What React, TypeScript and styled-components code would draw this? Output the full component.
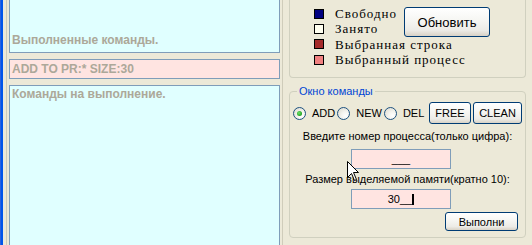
import React from "react";
import styled, { createGlobalStyle } from "styled-components";

const GlobalStyle = createGlobalStyle`
  html, body {
    margin: 0;
    padding: 0;
    width: 532px;
    height: 245px;
    overflow: hidden;
    background: #ece9d8;
  }
  #root { width: 532px; height: 245px; }
  * { box-sizing: border-box; }
`;

const Window = styled.div`
  position: relative;
  display: flex;
  width: 532px;
  height: 245px;
  overflow: hidden;
  background: #ece9d8;
  font-family: "Liberation Sans", Arial, sans-serif;
  font-size: 11px;
  color: #000;
`;

const FrameEdge = styled.div`
  flex: 0 0 3px;
  border-left: 1px solid #2a62de;
  background: #0055ea;
`;

const LeftPane = styled.div`
  flex: 0 0 276px;
  margin-left: 3px;
  border-left: 1px solid #cfccba;
  padding: 0 2px;
  display: flex;
  flex-direction: column;
  gap: 6px;
`;

const LogBox = styled.div<{ $bg: string; $h: number; $open?: boolean }>`
  flex: 0 0 ${(p) => p.$h}px;
  background: ${(p) => p.$bg};
  border: 1px solid #7f9db9;
  border-top-width: ${(p) => (p.$open ? 0 : 1)}px;
  display: flex;
  flex-direction: column;
  justify-content: ${(p) => (p.$open ? "flex-end" : "flex-start")};
  padding: ${(p) => (p.$open ? "0 2px 5px" : "2px 2px 0")};
  font-family: "Liberation Sans", Arial, sans-serif;
  font-weight: bold;
  font-size: 12px;
  line-height: 13px;
  color: #aca899;
  white-space: nowrap;
`;

const CommandLine = styled.div`
  flex: 0 0 20px;
  background: #ffe4e1;
  border: 1px solid #7f9db9;
  padding: 1px 2px 0;
  font-family: "Liberation Sans", Arial, sans-serif;
  font-weight: bold;
  font-size: 12px;
  line-height: 17px;
  color: #aca899;
  white-space: nowrap;
`;

const RightPane = styled.div`
  flex: 0 0 251px;
  border-left: 1px solid #cfccba;
  border-right: 1px solid #cfccba;
  padding: 0 6px;
  display: flex;
  flex-direction: column;
`;

const LegendGroup = styled.div`
  flex: 0 0 78px;
  border: 1px solid #d0d0bf;
  border-top: none;
  border-radius: 0 0 4px 4px;
  padding: 6px 0 0 24px;
  display: grid;
  grid-template-columns: 21px 69px 86px;
  grid-auto-rows: 15.4px;
  align-content: start;
`;

const Swatch = styled.span<{ $color: string }>`
  grid-column: 1;
  align-self: center;
  width: 10px;
  height: 10px;
  border: 1px solid #000;
  background: ${(p) => p.$color};
`;

const SwatchLabel = styled.span<{ $wide?: boolean }>`
  grid-column: ${(p) => (p.$wide ? "2 / 4" : "2")};
  font-family: "Liberation Serif", "Times New Roman", serif;
  font-size: 13px;
  letter-spacing: 1px;
  line-height: 15px;
  white-space: nowrap;
`;

const XpButton = styled.button<{ $w: number; $h: number; $size?: number }>`
  width: ${(p) => p.$w}px;
  height: ${(p) => p.$h}px;
  padding: 0;
  border: 1px solid #003c74;
  border-radius: 3px;
  background: linear-gradient(#ffffff 0%, #f7f7f4 40%, #ecebe6 80%, #d8d2c6 100%);
  font-family: "Liberation Sans", Arial, sans-serif;
  font-size: ${(p) => p.$size ?? 11}px;
  color: #000;
  display: flex;
  align-items: center;
  justify-content: center;
  white-space: nowrap;
`;

const RefreshButton = styled(XpButton)`
  grid-column: 3;
  grid-row: 1 / span 2;
  margin-top: 1px;
`;

const GroupBox = styled.div<{ $top: number; $h: number }>`
  position: relative;
  flex: 0 0 ${(p) => p.$h}px;
  margin-top: ${(p) => p.$top}px;
  border: 1px solid #d0d0bf;
  border-radius: 4px;
  padding: 10px 0 0 3px;
  display: flex;
  flex-direction: column;
`;

const GroupTitle = styled.span`
  position: absolute;
  top: -7px;
  left: 7px;
  padding: 0 2px;
  background: #ece9d8;
  color: #0046d5;
  font-size: 11px;
  line-height: 13px;
  white-space: nowrap;
`;

const RadioRow = styled.div`
  display: flex;
  align-items: center;
  height: 22px;
  padding-right: 3px;
`;

const RadioItem = styled.label`
  display: flex;
  align-items: center;
  gap: 6px;
  margin-right: 2px;
  white-space: nowrap;
`;

const RadioCircle = styled.span<{ $checked?: boolean }>`
  width: 13px;
  height: 13px;
  border-radius: 50%;
  border: 1px solid #1c5180;
  background: radial-gradient(circle at 70% 70%, #ffffff 0%, #f4f3ee 40%, #d9d7ca 100%);
  display: flex;
  align-items: center;
  justify-content: center;
  &::after {
    content: "";
    display: ${(p) => (p.$checked ? "block" : "none")};
    width: 5px;
    height: 5px;
    border-radius: 50%;
    background: radial-gradient(circle at 40% 40%, #6ee36e 0%, #21a121 70%, #1a8c1a 100%);
  }
`;

const ButtonPair = styled.div`
  margin-left: auto;
  display: flex;
  gap: 2px;
`;

const FieldLabel = styled.div<{ $top: number }>`
  margin-top: ${(p) => p.$top}px;
  padding-right: 3px;
  text-align: center;
  line-height: 13px;
  white-space: nowrap;
`;

const Field = styled.div<{ $top: number }>`
  margin-top: ${(p) => p.$top}px;
  margin-left: 58px;
  width: 100px;
  height: 20px;
  background: #ffe4e1;
  border: 1px solid #7f9db9;
  text-align: center;
  line-height: 18px;
  white-space: nowrap;
`;

const Caret = styled.span`
  display: inline-block;
  width: 2px;
  height: 11px;
  background: #000;
  vertical-align: -2px;
`;

const RunButton = styled(XpButton)`
  margin-top: 3px;
  align-self: flex-end;
  margin-right: 7px;
`;

const Pointer = styled.svg`
  position: absolute;
  left: 347px;
  top: 161px;
  width: 13px;
  height: 21px;
`;

const swatches = [
  { color: "#000080", text: "Свободно" },
  { color: "#fffff0", text: "Занято" },
  { color: "#a52a2a", text: "Выбранная строка", wide: true },
  { color: "#f08080", text: "Выбранный процесс", wide: true },
];

export default function App() {
  return (
    <>
      <GlobalStyle />
      <Window>
        <FrameEdge />
        <LeftPane>
          <LogBox $bg="#e0ffff" $h={53} $open>
            Выполненные команды.
          </LogBox>
          <CommandLine>ADD TO PR:* SIZE:30</CommandLine>
          <LogBox $bg="#e0ffff" $h={200}>
            Команды на выполнение.
          </LogBox>
        </LeftPane>
        <RightPane>
          <LegendGroup>
            {swatches.map((s) => (
              <React.Fragment key={s.text}>
                <Swatch $color={s.color} />
                <SwatchLabel $wide={s.wide}>{s.text}</SwatchLabel>
              </React.Fragment>
            ))}
            <RefreshButton $w={86} $h={30} $size={13}>
              Обновить
            </RefreshButton>
          </LegendGroup>
          <GroupBox $top={13} $h={147}>
            <GroupTitle>Окно команды</GroupTitle>
            <RadioRow>
              <RadioItem>
                <RadioCircle $checked />
                ADD
              </RadioItem>
              <RadioItem>
                <RadioCircle />
                NEW
              </RadioItem>
              <RadioItem>
                <RadioCircle />
                DEL
              </RadioItem>
              <ButtonPair>
                <XpButton $w={42} $h={22}>FREE</XpButton>
                <XpButton $w={49} $h={22}>CLEAN</XpButton>
              </ButtonPair>
            </RadioRow>
            <FieldLabel $top={6}>Введите номер процесса(только цифра):</FieldLabel>
            <Field $top={6}>___</Field>
            <FieldLabel $top={4}>Размер выделяемой памяти(кратно 10):</FieldLabel>
            <Field $top={3}>
              30__
              <Caret />
            </Field>
            <RunButton $w={73} $h={19}>Выполни</RunButton>
          </GroupBox>
          <GroupBox $top={12} $h={60}>
            <GroupTitle>Буфер</GroupTitle>
          </GroupBox>
        </RightPane>
        <Pointer viewBox="0 0 13 21">
          <polygon
            points="0.5,0.5 0.5,16.5 4.5,12.5 7.5,19.5 9.5,18.5 6.5,11.5 11.5,11.5"
            fill="#fff"
            stroke="#000"
            strokeWidth="1"
            strokeLinejoin="miter"
          />
        </Pointer>
      </Window>
    </>
  );
}
